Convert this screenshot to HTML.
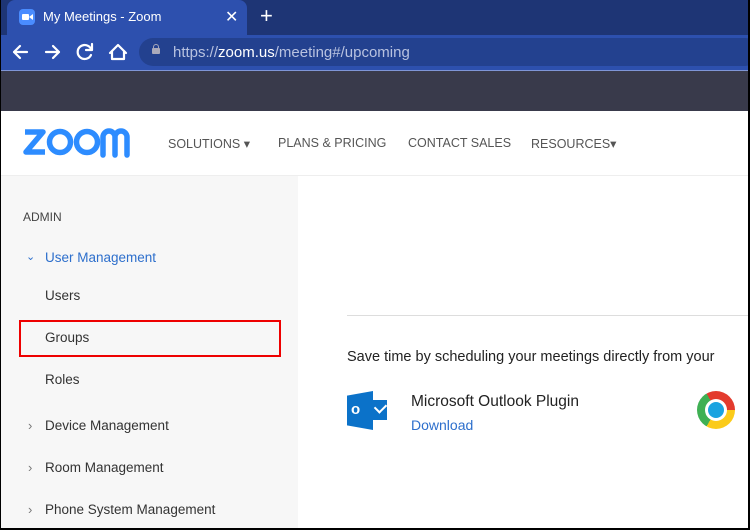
<!DOCTYPE html><html><head><style>
body{margin:0;width:750px;height:530px;overflow:hidden;font-family:"Liberation Sans",sans-serif;position:relative;background:#fff}
.a{position:absolute;white-space:nowrap}
</style></head><body>
<div class="a" style="left:0;top:0;width:750px;height:35px;background:#1e3575"></div>
<div class="a" style="left:7px;top:0;width:240px;height:36px;background:#2d50ae;border-radius:8px 8px 0 0"></div>
<div class="a" style="left:19px;top:9px;width:16px;height:16px;background:#4a8cff;border-radius:4px"><div class="a" style="left:3px;top:5px;width:7px;height:6px;background:#fff;border-radius:1px"></div><div class="a" style="left:10px;top:5px;width:0;height:0;border-top:3px solid transparent;border-bottom:3px solid transparent;border-right:4px solid #fff"></div></div>
<div class="a" style="left:43px;top:9px;color:#fff;font-size:13px">My Meetings - Zoom</div>
<div class="a" style="left:225px;top:7px;color:#fff;font-size:16px">✕</div>
<div class="a" style="left:260px;top:3px;color:#fff;font-size:22px">+</div>
<div class="a" style="left:0;top:35px;width:750px;height:35px;background:#2d50ae"></div>
<svg class="a" style="left:0;top:35px" width="135" height="35" fill="none" stroke="#fff" stroke-width="2.2" stroke-linecap="round" stroke-linejoin="round">
<path d="M27 17H14M20 11l-6 6 6 6"/><path d="M46 17h13M53 11l6 6-6 6"/>
<path d="M91 14a7 7 0 1 0 0 6"/><path d="M92 9v6h-6" />
<path d="M110 18l8-8 8 8M112 16v8h12v-8"/>
</svg>
<div class="a" style="left:139px;top:38px;width:620px;height:28px;background:#23418f;border-radius:14px"></div>
<div class="a" style="left:152px;top:48px;width:8px;height:6px;background:#aab;border-radius:1px"></div>
<div class="a" style="left:153px;top:44px;width:4px;height:5px;border:1px solid #aab;border-bottom:none;border-radius:3px 3px 0 0"></div>
<div class="a" style="left:173px;top:44px;color:#b8c2e0;font-size:15px">https://<span style="color:#fff">zoom.us</span>/meeting#/upcoming</div>
<div class="a" style="left:0;top:70px;width:750px;height:1px;background:#7f95d6"></div>
<div class="a" style="left:0;top:71px;width:750px;height:40px;background:#393a4b"></div>
<svg class="a" style="left:0;top:115px" width="150" height="60" fill="none" stroke="#2d8cff" stroke-width="5.5">
<path d="M25 17h18L26 37h19" stroke-linejoin="round"/>
<circle cx="60" cy="27" r="10.5"/><circle cx="87" cy="27" r="10.5"/>
<path d="M103 40V22a6 6 0 0 1 12 0v18M115 22a6 6 0 0 1 12 0v18" stroke-linecap="round"/>
</svg>
<div class="a" style="left:168px;top:136px;color:#555;font-size:12.5px">SOLUTIONS ▾</div>
<div class="a" style="left:278px;top:136px;color:#555;font-size:12.5px">PLANS &amp; PRICING</div>
<div class="a" style="left:408px;top:136px;color:#555;font-size:12.5px">CONTACT SALES</div>
<div class="a" style="left:531px;top:136px;color:#555;font-size:12.5px">RESOURCES▾</div>
<div class="a" style="left:0;top:175px;width:750px;height:1px;background:#eee"></div>
<div class="a" style="left:0;top:176px;width:298px;height:354px;background:#f7f7f7"></div>
<div class="a" style="left:23px;top:210px;color:#444;font-size:12px">ADMIN</div>
<div class="a" style="left:26px;top:250px;color:#2d6fcc;font-size:11px">⌄</div>
<div class="a" style="left:45px;top:250px;color:#2d6fcc;font-size:13.5px">User Management</div>
<div class="a" style="left:45px;top:288px;color:#333;font-size:13.5px">Users</div>
<div class="a" style="left:19px;top:320px;width:258px;height:33px;border:2px solid #e00"></div>
<div class="a" style="left:45px;top:330px;color:#333;font-size:13.5px">Groups</div>
<div class="a" style="left:45px;top:372px;color:#333;font-size:13.5px">Roles</div>
<div class="a" style="left:28px;top:418px;color:#777;font-size:13px">›</div><div class="a" style="left:45px;top:418px;color:#333;font-size:13.5px">Device Management</div>
<div class="a" style="left:28px;top:460px;color:#777;font-size:13px">›</div><div class="a" style="left:45px;top:460px;color:#333;font-size:13.5px">Room Management</div>
<div class="a" style="left:28px;top:502px;color:#777;font-size:13px">›</div><div class="a" style="left:45px;top:502px;color:#333;font-size:13.5px">Phone System Management</div>
<div class="a" style="left:347px;top:315px;width:403px;height:1px;background:#ddd"></div>
<div class="a" style="left:347px;top:349px;color:#222;font-size:14.5px">Save time by scheduling your meetings directly from your</div>
<div class="a" style="left:347px;top:391px;width:26px;height:39px;background:#0b72c9;clip-path:polygon(0 12%,100% 0,100% 100%,0 88%)"></div>
<div class="a" style="left:351px;top:401px;color:#fff;font-size:15px;font-weight:bold">o</div>
<div class="a" style="left:373px;top:400px;width:14px;height:20px;background:#0b72c9"></div>
<div class="a" style="left:375px;top:403px;width:9px;height:6px;border-left:2px solid #fff;border-bottom:2px solid #fff;transform:rotate(-45deg)"></div>
<div class="a" style="left:411px;top:393px;color:#222;font-size:15.5px">Microsoft Outlook Plugin</div>
<div class="a" style="left:411px;top:417px;color:#2d6fcc;font-size:14px">Download</div>
<div class="a" style="left:697px;top:391px;width:38px;height:38px;border-radius:50%;background:conic-gradient(from -30deg,#e33b2e 0 120deg,#fbcb1a 120deg 240deg,#3fb054 240deg 360deg)"></div>
<div class="a" style="left:705px;top:399px;width:22px;height:22px;border-radius:50%;background:#fff"></div>
<div class="a" style="left:708px;top:402px;width:16px;height:16px;border-radius:50%;background:#1aa3e0"></div>
<div class="a" style="left:748px;top:0;width:2px;height:530px;background:#000"></div>
<div class="a" style="left:0;top:0;width:1px;height:530px;background:#000"></div>
<div class="a" style="left:0;top:528px;width:750px;height:2px;background:#000"></div>
</body></html>
